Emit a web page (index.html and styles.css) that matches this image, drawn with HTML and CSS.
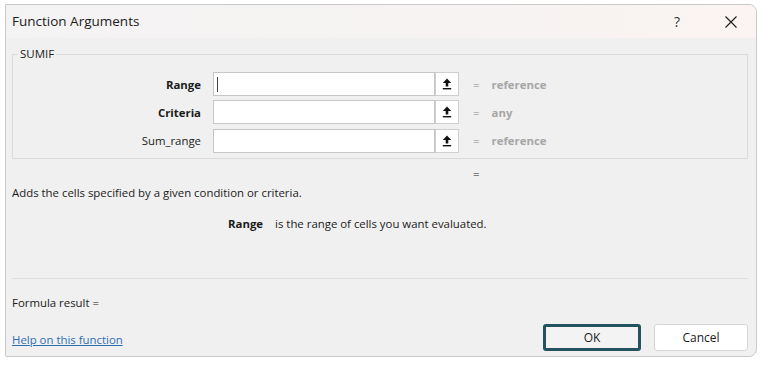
FILE: index.html
```html
<!DOCTYPE html>
<html>
<head>
<meta charset="utf-8">
<link rel="stylesheet" href="styles.css">
</head>
<body>
<div class="dialog">
  <div class="titlebar">
    <span class="title">Function Arguments</span>
    <span class="help">?</span>
    <span class="close">
      <svg width="12" height="12" viewBox="0 0 12 12"><path d="M0.5 0.5 L11.5 11.5 M11.5 0.5 L0.5 11.5" stroke="#1a1a1a" stroke-width="1.1" fill="none"/></svg>
    </span>
  </div>
  <div class="content">
    <fieldset class="group">
      <legend class="legend">SUMIF</legend>
      <div class="rows">
        <div class="label bold">Range</div>
        <div class="field"><div class="input"><span class="caret"></span></div><div class="pick"><svg width="10" height="12" viewBox="0 0 10 12"><path d="M5 0.5 L9.2 5 L6.3 5 L6.3 8.5 L3.7 8.5 L3.7 5 L0.8 5 Z" fill="#111"/><rect x="0.8" y="10" width="8.4" height="1.4" fill="#111"/></svg></div></div>
        <div class="eq">=</div>
        <div class="type">reference</div>

        <div class="label bold">Criteria</div>
        <div class="field"><div class="input"></div><div class="pick"><svg width="10" height="12" viewBox="0 0 10 12"><path d="M5 0.5 L9.2 5 L6.3 5 L6.3 8.5 L3.7 8.5 L3.7 5 L0.8 5 Z" fill="#111"/><rect x="0.8" y="10" width="8.4" height="1.4" fill="#111"/></svg></div></div>
        <div class="eq">=</div>
        <div class="type">any</div>

        <div class="label">Sum_range</div>
        <div class="field"><div class="input"></div><div class="pick"><svg width="10" height="12" viewBox="0 0 10 12"><path d="M5 0.5 L9.2 5 L6.3 5 L6.3 8.5 L3.7 8.5 L3.7 5 L0.8 5 Z" fill="#111"/><rect x="0.8" y="10" width="8.4" height="1.4" fill="#111"/></svg></div></div>
        <div class="eq">=</div>
        <div class="type">reference</div>
      </div>
    </fieldset>
    <div class="result-eq">=</div>
    <div class="desc">Adds the cells specified by a given condition or criteria.</div>
    <div class="argdesc"><span class="bold">Range</span><span class="argtext">is the range of cells you want evaluated.</span></div>
    <div class="sep"></div>
    <div class="formula">Formula result =</div>
    <div class="footer">
      <a class="link" href="#">Help on this function</a>
      <div class="buttons">
        <button class="btn ok">OK</button>
        <button class="btn cancel">Cancel</button>
      </div>
    </div>
  </div>
</div>
</body>
</html>
```
FILE: styles.css
```css
html, body {
  margin: 0;
  padding: 0;
  background: #ffffff;
}
body {
  font-family: "Open Sans", "Noto Sans", sans-serif;
  font-size: 11.4px;
  color: #1b1b1b;
}
.dialog {
  margin: 4px 0 0 5px;
  width: 752px;
  height: 353px;
  box-sizing: border-box;
  border: 1px solid #c9c9c9;
  border-radius: 0 8px 8px 2px;
  background: #f0f0f0;
  display: flex;
  flex-direction: column;
  overflow: hidden;
}
.titlebar {
  height: 33px;
  flex: none;
  display: flex;
  align-items: center;
  padding-left: 6px;
  background: linear-gradient(to right, #f4f3f3, #f6f3f2 60%, #fbf4f2);
}
.title {
  font-size: 13.5px;
  flex: 1;
  padding-bottom: 1px;
}
.help {
  font-size: 14px;
  color: #333;
  width: 51px;
}
.close {
  width: 31px;
  display: flex;
  padding-top: 1px;
}
.content {
  padding: 8px 8px 0 6px;
  display: flex;
  flex-direction: column;
}
.group {
  margin: 0;
  padding: 10px 0 5.5px 0;
  border: 1px solid #dadada;
  min-width: 0;
}
.legend {
  font-size: 11.5px;
  line-height: 16px;
  padding: 0 2px;
  margin-left: 5px;
  color: #222;
}
.rows {
  display: grid;
  grid-template-columns: 188px 246px max-content max-content;
  justify-content: start;
  column-gap: 12px;
  row-gap: 4.3px;
  align-items: center;
}
.label {
  text-align: right;
}
.bold {
  font-weight: 700;
}
.field {
  display: flex;
  height: 24px;
}
.input {
  width: 222px;
  box-sizing: border-box;
  border: 1px solid #c6c6c6;
  background: #fff;
  display: flex;
  align-items: center;
  padding-left: 3px;
}
.caret {
  width: 1px;
  height: 15px;
  background: #444;
}
.pick {
  width: 24px;
  box-sizing: border-box;
  border: 1px solid #cfcfcf;
  background: #fff;
  display: flex;
  align-items: center;
  justify-content: center;
}
.eq {
  color: #8a8a8a;
  margin-left: 2px;
}
.type {
  color: #a6a6a6;
  font-weight: 700;
}
.result-eq {
  margin-top: 7px;
  padding-left: 461px;
  line-height: 16px;
}
.desc {
  margin-top: 3px;
  line-height: 16px;
}
.argdesc {
  margin-top: 15px;
  line-height: 16px;
  padding-left: 216px;
}
.argtext {
  margin-left: 12px;
}
.sep {
  margin-top: 46px;
  height: 1px;
  background: #dedede;
}
.formula {
  margin-top: 16px;
  line-height: 16px;
}
.footer {
  margin-top: 13px;
  display: flex;
  align-items: center;
  justify-content: space-between;
}
.link {
  color: #2e6fb0;
  text-decoration: underline;
  padding-top: 3px;
}
.buttons {
  display: flex;
  gap: 13px;
}
.btn {
  font-family: "Open Sans", "Noto Sans", sans-serif;
  font-size: 12px;
  color: #1b1b1b;
  height: 27px;
  box-sizing: border-box;
  border-radius: 3px;
  padding: 0;
}
.ok {
  width: 98px;
  background: #f3f3f3;
  border: 3px solid #24525e;
}
.cancel {
  width: 94px;
  background: #ffffff;
  border: 1px solid #d6d6d6;
}
```
